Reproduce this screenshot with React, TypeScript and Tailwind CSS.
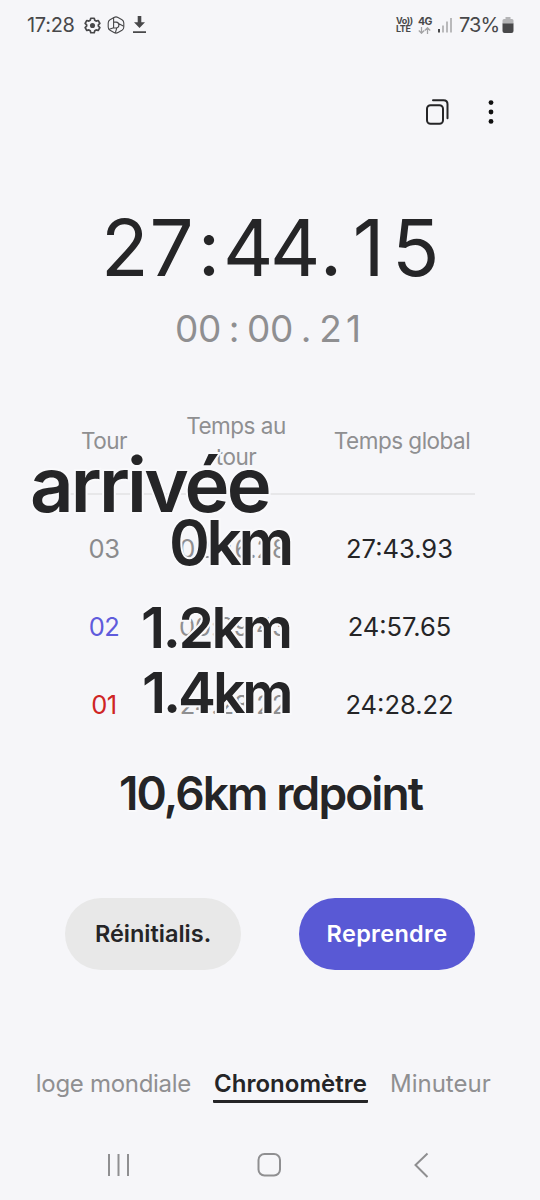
import clsx from 'clsx';

interface Lap {
  id: string;
  split: string;
  total: string;
  color: string;
}

const laps: Lap[] = [
  { id: '03', split: '02:46.28', total: '27:43.93', color: 'text-[#8b8b8d]' },
  { id: '02', split: '00:29.43', total: '24:57.65', color: 'text-[#5f5bdc]' },
  { id: '01', split: '24:28.22', total: '24:28.22', color: 'text-[#cf2424]' },
];

// Notes that sit on top of the lap table
const notes = [
  { text: 'arrivée', className: 'left-[30px] top-[442px] text-[76px] tracking-[-2.8px]' },
  { text: '0km', className: 'left-[169px] top-[501px] text-[62px] tracking-[-3.3px]' },
  { text: '1.2km', className: 'left-[141px] top-[586px] text-[57px] tracking-[-2.4px]' },
  { text: '1.4km', className: 'left-[142px] top-[651px] text-[57px] tracking-[-3.1px]' },
  { text: '10,6km rdpoint', className: 'left-[119px] top-[751px] text-[46px] tracking-[-1.9px]' },
];

function Digits({ value, className }: { value: string; className: string }) {
  return (
    <span className="flex">
      {value.split('').map((d, i) => (
        <span key={i} className={clsx('text-center', className)}>{d}</span>
      ))}
    </span>
  );
}

function StatusBar() {
  return (
    <header className="flex h-[50px] items-center pl-[27px] pr-[26px] text-[#48484a]">
      <span className="w-[57px] text-[20px] tracking-[-0.3px] whitespace-nowrap">17:28</span>
      <svg className="h-[17px] w-[17px]" viewBox="0 0 18 18" fill="none" stroke="currentColor" strokeWidth="1.8" strokeLinejoin="round">
        <path d="M7.2 1.3h3.6l.6 2.2 1.4.8 2.2-.6 1.8 3.1-1.6 1.6v1.2l1.6 1.6-1.8 3.1-2.2-.6-1.4.8-.6 2.2H7.2l-.6-2.2-1.4-.8-2.2.6-1.8-3.1 1.6-1.6V8.4L1.2 6.8 3 3.7l2.2.6 1.4-.8z" />
        <circle cx="9" cy="9" r="2.7" fill="currentColor" stroke="none" />
      </svg>
      <svg className="ml-[6px] h-[18px] w-[18px]" viewBox="0 0 18 18" fill="none" stroke="currentColor" strokeWidth="1.1" strokeLinejoin="round">
        <path d="M7 1.4Q9 .3 11 1.4L15 3.7Q16.800 4.800 16.800 7v4q0 2.200-1.800 3.300l-4 2.300Q9 17.700 7 16.600L3 14.300Q1.200 13.200 1.200 11V7Q1.200 4.800 3 3.700z" />
        <path d="M6.6 1.6v10.200l-4.900 1.700M6.800 6.100h2.400q2.700.3 2.700 3 0 2.600-2.700 2.900H6.600M11.500 7.500l5.200 2.700M9.800 12l-1.500 4.800" />
      </svg>
      <svg className="ml-[8px] h-[18px] w-[13px]" viewBox="0 0 13 18" fill="currentColor">
        <path d="M4.7 0h3.6v6.300h3.700L6.500 12 1 6.300h3.700zM0 15.200h13v1.900H0z" />
      </svg>

      <div className="ml-auto flex items-center">
        <div className="flex w-[22px] flex-col text-[9px] leading-[8.5px] font-bold tracking-[-0.4px]">
          <span>Vo))</span>
          <span>LTE</span>
        </div>
        <div className="flex w-[20px] flex-col">
          <span className="text-[10.5px] leading-[9px] font-bold tracking-[-0.6px]">4G</span>
          <svg className="mt-px h-[7px] w-[13px]" viewBox="0 0 13 7" fill="none" stroke="#a3a3a5" strokeWidth="1.3">
            <path d="M3.5 0v6M.8 3.5l2.7 2.7 2.7-2.7M9.5 7V1M6.8 3.5L9.5.8l2.7 2.7" />
          </svg>
        </div>
        <svg className="h-[16px] w-[15px]" viewBox="0 0 15 16">
          <rect x="0" y="12" width="2" height="3.5" fill="#48484a" />
          <rect x="4" y="8.5" width="2" height="7" fill="#b9b9bb" />
          <rect x="8" y="4.5" width="2" height="11" fill="#b9b9bb" />
          <rect x="12" y="1" width="2" height="14.5" fill="#b9b9bb" />
        </svg>
        <span className="ml-[6px] w-[43px] text-[20px] tracking-[-0.9px] whitespace-nowrap">73%</span>
        <svg className="h-[17px] w-[12px]" viewBox="0 0 12 17">
          <path d="M3.5 0h5v2H10q1.5 0 1.5 1.5V7H.5V3.5Q.5 2 2 2h1.5z" fill="#b4b4b6" />
          <path d="M.5 6.5h11v7.5q0 2-2 2h-7q-2 0-2-2z" fill="#48484a" />
        </svg>
      </div>
    </header>
  );
}

function LapTable() {
  return (
    <section className="mx-[65px] mt-[40px]">
      <div className="grid h-[105px] grid-cols-[78px_186px_146px] items-center border-b-2 border-[#e7e7e9] text-center text-[22.5px] leading-[30.5px] tracking-[-0.5px] text-[#8f8f91]">
        <span>Tour</span>
        <span className="px-10">Temps au tour</span>
        <span className="whitespace-nowrap">Temps global</span>
      </div>
      <div className="pt-[15px]">
        {laps.map((lap) => (
          <div key={lap.id} className="grid h-[78px] grid-cols-[78px_181px_151px] items-center text-center text-[25.5px]">
            <span className={clsx('tracking-[-0.5px]', lap.color)}>{lap.id}</span>
            <span className="tracking-[-0.1px] text-[#8f8f91]">{lap.split}</span>
            <span className="text-[#252527]">{lap.total}</span>
          </div>
        ))}
      </div>
    </section>
  );
}

export default function App() {
  return (
    <div className="relative flex h-[1200px] w-[540px] flex-col overflow-hidden bg-[#f6f6f9] font-['Inter',sans-serif] text-[#252527]">
      <StatusBar />

      <div className="flex h-[124px] items-center justify-end pr-[46px]">
        <svg className="h-[28px] w-[26px]" viewBox="0 0 26 28" fill="none" stroke="#252527" strokeWidth="2" strokeLinecap="round">
          <rect x="2" y="7.3" width="16" height="18.5" rx="3.5" />
          <path d="M8 2.3h10.5q4 0 4 4v14" />
        </svg>
        <svg className="ml-[37px] h-[28px] w-[6px]" viewBox="0 0 6 28" fill="#111">
          <circle cx="3" cy="4.6" r="2.4" />
          <circle cx="3" cy="14" r="2.4" />
          <circle cx="3" cy="23.4" r="2.4" />
        </svg>
      </div>

      <div className="mt-[32px] flex h-[84px] items-center justify-center text-[78px] leading-[84px]">
        <Digits value="27" className="w-[47px]" />
        <span className="w-[28px] text-center">:</span>
        <Digits value="44" className="w-[47px]" />
        <span className="w-[28px] text-center">.</span>
        <Digits value="15" className="w-[47px]" />
      </div>
      <div className="mt-[17px] flex h-[43px] items-center justify-center text-[37px] leading-[43px] text-[#8f8f91]">
        <Digits value="00" className="w-[23px]" />
        <span className="w-[26px] text-center">:</span>
        <Digits value="00" className="w-[23px]" />
        <span className="w-[26px] text-center">.</span>
        <Digits value="21" className="w-[23px]" />
      </div>

      <LapTable />

      <div className="mx-[65px] mt-[154px] flex justify-between text-[23.5px] font-semibold">
        <button className="h-[72px] w-[176px] rounded-full bg-[#e8e8e8]">Réinitialis.</button>
        <button className="h-[72px] w-[176px] rounded-full bg-[#5959d5] tracking-[0.3px] text-white">Reprendre</button>
      </div>

      <nav className="mt-[94px] flex h-[40px] pl-[36px] text-[24px] leading-[40px] whitespace-nowrap text-[#8f8f91]">
        <div className="flex w-[155px] justify-end tracking-[-0.3px]">loge mondiale</div>
        <div className="ml-[22px] h-[39px] w-[155px] rounded-[1px] border-b-3 border-[#252527] text-center font-semibold text-[#252527]">
          Chronomètre
        </div>
        <div className="ml-[22px]">Minuteur</div>
      </nav>

      <div className="mt-[47px] flex items-center pl-[107px]">
        <svg className="h-[28px] w-[24px]" viewBox="0 0 24 28" fill="none" stroke="#8f8f91" strokeWidth="2">
          <path d="M2 3v22M11.5 3v22M21 3v22" />
        </svg>
        <svg className="ml-[125px] h-[28px] w-[28px]" viewBox="0 0 28 28" fill="none" stroke="#8f8f91" strokeWidth="2">
          <rect x="2.5" y="3" width="21.5" height="21.5" rx="6" />
        </svg>
        <svg className="ml-[129px] h-[28px] w-[18px]" viewBox="0 0 18 28" fill="none" stroke="#8f8f91" strokeWidth="2">
          <path d="M14.5 2.5L2.5 14l12 12" />
        </svg>
      </div>

      {notes.map((note) => (
        <div
          key={note.text}
          className={clsx(
            'absolute leading-[84px] font-semibold whitespace-nowrap [paint-order:stroke_fill] [-webkit-text-stroke:4px_#f9f9fb]',
            note.className,
          )}
        >
          {note.text}
        </div>
      ))}
    </div>
  );
}
